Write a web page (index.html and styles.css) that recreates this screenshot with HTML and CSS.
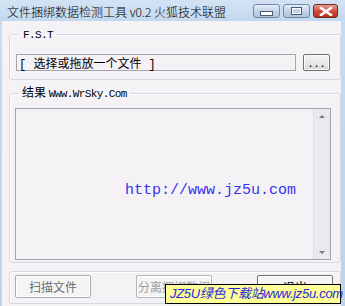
FILE: index.html
```html
<!DOCTYPE html>
<html lang="zh">
<head>
  <meta charset="UTF-8" />
  <title>文件捆绑数据检测工具 v0.2</title>
  <link rel="stylesheet" href="styles.css">
</head>
<body>
  <div class="window">
    <div class="titlebar">
      <span class="title">文件捆绑数据检测工具 v0.2 火狐技术联盟</span>
      <div class="caption-btns">
        <span class="cbtn min"><i></i></span>
        <span class="cbtn max"><i></i></span>
        <span class="cbtn close">
          <svg width="14" height="9" viewBox="0 0 14 9"><path d="M2 1 L12 8 M12 1 L2 8" stroke="#fff" stroke-width="2.6" stroke-linecap="square"/></svg>
        </span>
      </div>
    </div>

    <div class="client">
      <fieldset class="group file-group">
        <legend><span class="mono">F.S.T</span></legend>
        <div class="row">
          <div class="input"><span class="mono">[ </span>选择或拖放一个文件<span class="mono"> ]</span></div>
          <button class="browse">...</button>
        </div>
      </fieldset>

      <fieldset class="group result-group">
        <legend>结果 <span class="mono">Www.WrSky.Com</span></legend>
        <div class="output">
          <div class="output-body"><span class="url">http://www.jz5u.com</span></div>
          <div class="vscroll">
            <span class="arrow up"></span>
            <span class="arrow down"></span>
          </div>
        </div>
      </fieldset>

      <div class="group actions">
        <button class="btn">扫描文件</button>
        <button class="btn disabled">分离捆绑数据</button>
        <button class="btn">退出</button>
      </div>
    </div>

    <div class="watermark">JZ5U绿色下载站www.jz5u.com</div>
  </div>
</body>
</html>
```

FILE: styles.css
```css
body {
  margin: 0;
  font-family: "Noto Sans CJK SC", "Liberation Sans", sans-serif;
  font-size: 12px;
  color: #000;
}
.window {
  position: relative;
  width: 345px;
  height: 306px;
  overflow: hidden;
  background: linear-gradient(to bottom, #c8dcf1, #bcd3ec);
  display: flex;
  flex-direction: column;
}
.titlebar {
  height: 21px;
  flex: none;
  display: flex;
  align-items: center;
  justify-content: space-between;
  padding: 0 7px 0 7px;
  background: linear-gradient(to bottom, #d3e3f4, #c3d8ee);
}
.title {
  font-size: 12px;
  line-height: 12px;
  padding-top: 2px;
  font-weight: 300;
}
.caption-btns {
  display: flex;
  gap: 3px;
  margin-top: 1px;
}
.cbtn {
  width: 27px;
  height: 14px;
  border: 1px solid #6f88a8;
  border-radius: 3px;
  background: linear-gradient(to bottom, #e6eef8, #c3d3e6 50%, #b2c5dc);
  display: flex;
  align-items: center;
  justify-content: center;
  box-sizing: border-box;
}
.cbtn.min i {
  width: 11px;
  height: 3px;
  margin-top: 4px;
  border: 1px solid #4a5a70;
  background: #fff;
}
.cbtn.max i {
  width: 9px;
  height: 6px;
  border: 1px solid #4a5a70;
  box-shadow: inset 0 0 0 1px #fff;
}
.cbtn.close {
  width: 25px;
  border-color: #6b2a22;
  background: linear-gradient(to bottom, #e8a292, #cd4d3a 50%, #b8321f);
}
.client {
  flex: 1;
  margin: 0 4px 0 2px;
  padding: 6px 0 0 7px;
  background: #f5f2f6;
  display: flex;
  flex-direction: column;
}
.group {
  width: 332px;
  box-sizing: border-box;
  margin: 0;
  border: 1px solid #d4d8e0;
  border-radius: 3px;
  box-shadow: inset 1px 1px 0 #fff;
}
.group legend {
  margin-left: 4px;
  padding: 0 3px;
  font-size: 12px;
  line-height: 12px;
}
.mono {
  font-family: "Liberation Mono", monospace;
  font-size: 11px;
  letter-spacing: -0.6px;
  white-space: pre;
}
.file-group {
  padding: 13px 9px 8px 6px;
}
.row {
  display: flex;
  gap: 7px;
  align-items: flex-start;
}
.input {
  width: 280px;
  height: 17px;
  box-sizing: border-box;
  border: 1px solid #a7a5ab;
  padding: 0 2px;
  font-size: 12px;
  line-height: 15px;
  white-space: nowrap;
}
.input .mono {
  font-size: 12px;
  letter-spacing: 0;
}
.browse {
  width: 27px;
  height: 17px;
  padding: 0;
  border: 1px solid #707070;
  border-radius: 2px;
  background: linear-gradient(to bottom, #f4f4f4, #e8e8e8 50%, #d6d6d6);
  box-shadow: inset 0 0 0 1px #fbfbfb;
  font-family: "DejaVu Sans Mono", monospace;
  font-size: 10px;
  line-height: 18px;
  color: #000;
}
.result-group {
  margin-top: 6px;
  padding: 8px 9px 2px 5px;
}
.output {
  height: 152px;
  box-sizing: border-box;
  border: 1px solid #a5a3aa;
  display: flex;
}
.output-body {
  flex: 1;
}
.url {
  display: block;
  margin: 74px 0 0 109px;
  font-family: "Liberation Mono", monospace;
  font-size: 15px;
  line-height: 15px;
  color: #3434f0;
}
.vscroll {
  width: 16px;
  background: #ebe9ee;
  border-left: 1px solid #e0dee4;
  display: flex;
  flex-direction: column;
  justify-content: space-between;
  align-items: center;
  padding: 6px 0 5px;
}
.arrow {
  width: 0;
  height: 0;
  border-left: 3px solid transparent;
  border-right: 3px solid transparent;
}
.arrow.up { border-bottom: 3px solid #7a7a7a; }
.arrow.down { border-top: 3px solid #7a7a7a; }
.actions {
  margin-top: 8px;
  height: 33px;
  display: flex;
  align-items: center;
  justify-content: space-between;
  padding: 0 7px 2px 5px;
}
.btn {
  width: 76px;
  height: 23px;
  padding: 0;
  border: 1px solid #acacac;
  border-radius: 2px;
  background: #f4f4f4;
  box-shadow: inset 0 0 0 1px #fff;
  font-family: "Noto Sans CJK SC", sans-serif;
  font-size: 12px;
  color: #6d6d6d;
}
.btn.disabled {
  color: #a0a0a0;
  border-color: #b4b4b4;
}
.btn:last-child {
  border-color: #707070;
  color: #000;
}
.watermark {
  position: absolute;
  left: 165px;
  top: 284px;
  width: 176px;
  height: 20px;
  box-sizing: border-box;
  border: 1px solid #000;
  background: #ffff99;
  font-family: "Liberation Sans", "Noto Sans CJK SC", sans-serif;
  font-style: italic;
  font-size: 13px;
  line-height: 18px;
  color: #2828d8;
  padding-left: 4px;
  white-space: nowrap;
  letter-spacing: -0.3px;
}
```
